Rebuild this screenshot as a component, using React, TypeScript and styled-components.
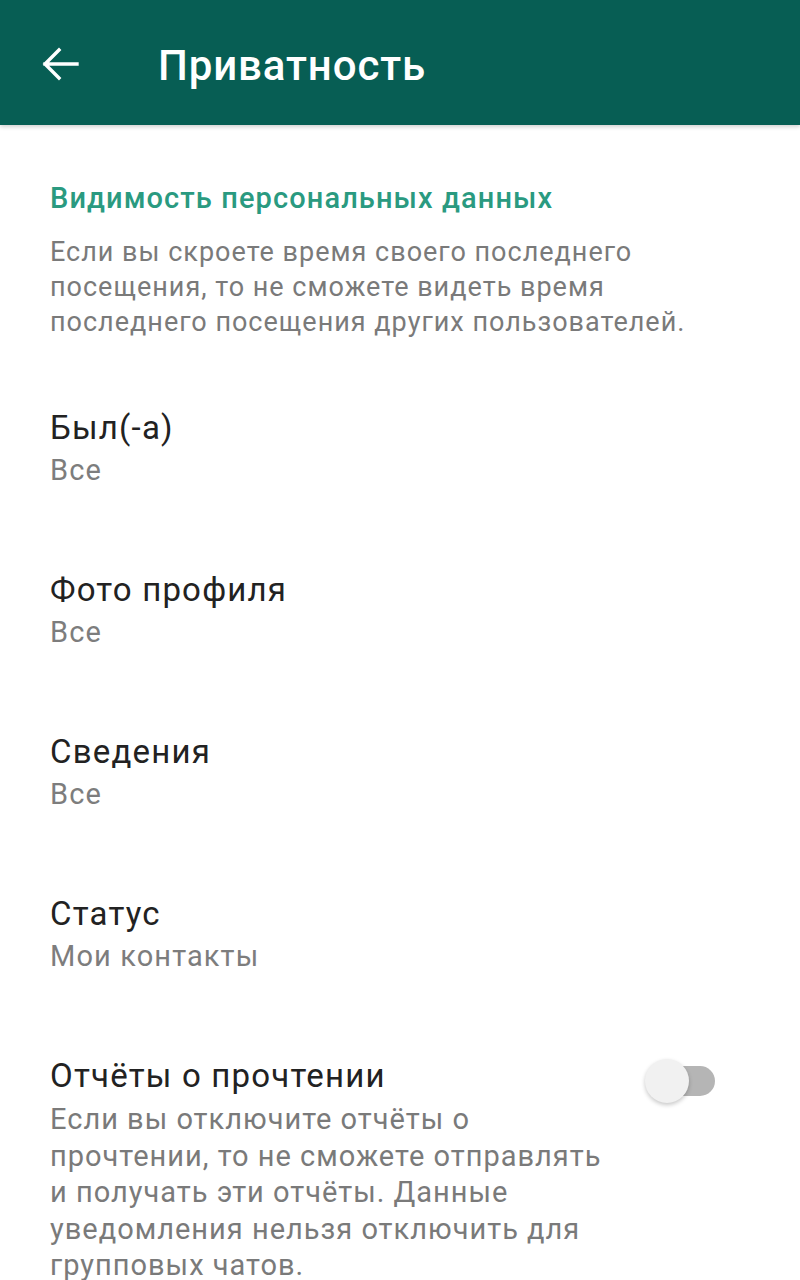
import React from 'react';
import styled, { createGlobalStyle } from 'styled-components';

const GlobalStyle = createGlobalStyle`
  html, body {
    margin: 0;
    padding: 0;
    background: #fff;
  }
  body {
    font-family: Roboto, "Noto Sans", "Liberation Sans", sans-serif;
    -webkit-font-smoothing: antialiased;
  }
`;

const Page = styled.div`
  width: 800px;
  min-height: 1280px;
  background: #fff;
  overflow: hidden;
`;

const Toolbar = styled.header`
  height: 125px;
  background: #075e54;
  display: flex;
  align-items: center;
  padding-left: 40px;
  box-shadow: 0 2px 4px rgba(0, 0, 0, 0.18);
  position: relative;
  z-index: 1;
`;

const BackButton = styled.button`
  width: 40px;
  height: 40px;
  padding: 0;
  border: none;
  background: transparent;
  display: flex;
  align-items: center;
  justify-content: center;
  margin-top: 2px;
  cursor: pointer;
`;

const Title = styled.h1`
  margin: 6px 0 0 78px;
  color: #fff;
  font-size: 42px;
  font-weight: 500;
  letter-spacing: 0.9px;
  line-height: 1;
`;

const Content = styled.main`
  padding: 55px 0 0 50px;
`;

const SectionTitle = styled.h2`
  margin: 0;
  font-size: 29px;
  font-weight: 500;
  line-height: 36px;
  color: #2a9a80;
  letter-spacing: 1.1px;
`;

const Hint = styled.p<{ $large?: boolean }>`
  margin: 0;
  font-size: ${p => (p.$large ? '29px' : '27px')};
  line-height: ${p => (p.$large ? '36.5px' : '35px')};
  color: #7a7a7a;
  letter-spacing: 1px;
`;

const SectionHint = styled(Hint)`
  margin-top: 19px;
  margin-bottom: 28px;
`;

const ItemHint = styled(Hint)`
  margin-top: 4px;
`;

const Item = styled.div`
  display: flex;
  align-items: flex-start;
  padding: 39px 85px 39px 0;
`;

const ItemText = styled.div`
  flex: 1;
  display: flex;
  flex-direction: column;
`;

const ItemTitle = styled.div`
  font-size: 33px;
  line-height: 42px;
  color: #222;
  letter-spacing: 1.2px;
`;

const ItemValue = styled.div`
  font-size: 29px;
  line-height: 42px;
  color: #7d7d7d;
  letter-spacing: 1.1px;
`;

const Switch = styled.div`
  position: relative;
  width: 70px;
  height: 46px;
  margin-top: 3px;
  flex-shrink: 0;
`;

const Track = styled.span`
  position: absolute;
  left: 10px;
  top: 8px;
  width: 60px;
  height: 30px;
  border-radius: 15px;
  background: #b5b5b5;
`;

const Knob = styled.span`
  position: absolute;
  left: 0;
  top: 1px;
  width: 44px;
  height: 44px;
  border-radius: 50%;
  background: #f1f1f1;
  box-shadow: 0 2px 4px rgba(0, 0, 0, 0.22);
`;

const ArrowIcon = () => (
  <svg width="38" height="36" viewBox="0 0 38 36" fill="none">
    <path
      d="M36 18H4M18 4L4 18l14 14"
      stroke="#fff"
      strokeWidth="3.4"
      strokeLinecap="square"
      strokeLinejoin="miter"
    />
  </svg>
);

const items = [
  { title: 'Был(-а)', value: 'Все' },
  { title: 'Фото профиля', value: 'Все' },
  { title: 'Сведения', value: 'Все' },
  { title: 'Статус', value: 'Мои контакты' },
];

export default function App() {
  return (
    <Page>
      <GlobalStyle />
      <Toolbar>
        <BackButton aria-label="Назад">
          <ArrowIcon />
        </BackButton>
        <Title>Приватность</Title>
      </Toolbar>
      <Content>
        <SectionTitle>Видимость персональных данных</SectionTitle>
        <SectionHint>
          Если вы скроете время своего последнего
          <br />
          посещения, то не сможете видеть время
          <br />
          последнего посещения других пользователей.
        </SectionHint>
        {items.map(item => (
          <Item key={item.title}>
            <ItemText>
              <ItemTitle>{item.title}</ItemTitle>
              <ItemValue>{item.value}</ItemValue>
            </ItemText>
          </Item>
        ))}
        <Item>
          <ItemText>
            <ItemTitle>Отчёты о прочтении</ItemTitle>
            <ItemHint $large>
              Если вы отключите отчёты о
              <br />
              прочтении, то не сможете отправлять
              <br />
              и получать эти отчёты. Данные
              <br />
              уведомления нельзя отключить для
              <br />
              групповых чатов.
            </ItemHint>
          </ItemText>
          <Switch>
            <Track />
            <Knob />
          </Switch>
        </Item>
      </Content>
    </Page>
  );
}
